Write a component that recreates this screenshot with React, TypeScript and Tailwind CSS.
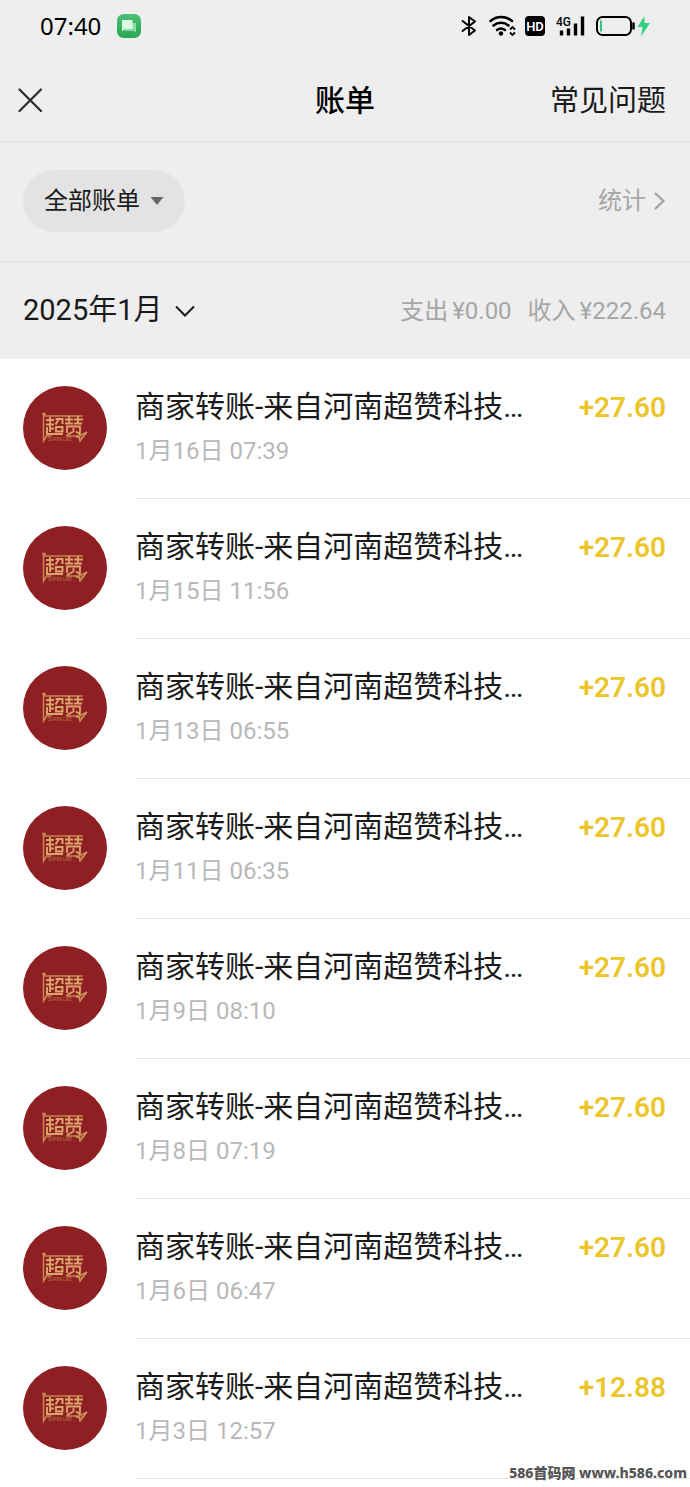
type Bill = { date: string; time: string; amount: string };

const BILLS: Bill[] = [
  { date: "1月16日", time: "07:39", amount: "+27.60" },
  { date: "1月15日", time: "11:56", amount: "+27.60" },
  { date: "1月13日", time: "06:55", amount: "+27.60" },
  { date: "1月11日", time: "06:35", amount: "+27.60" },
  { date: "1月9日", time: "08:10", amount: "+27.60" },
  { date: "1月8日", time: "07:19", amount: "+27.60" },
  { date: "1月6日", time: "06:47", amount: "+27.60" },
  { date: "1月3日", time: "12:57", amount: "+12.88" },
];

function StatusBar() {
  return (
    <div className="flex h-[52px] items-center justify-between px-10">
      <div className="flex items-center gap-4">
        <span className="font-['Noto_Sans',sans-serif] text-2xl text-black">07:40</span>
        <svg className="h-6 w-6" viewBox="0 0 24 24">
          <defs>
            <linearGradient id="msg" x1="0" y1="0" x2="0" y2="1">
              <stop offset="0" stopColor="#4cbf76" />
              <stop offset="1" stopColor="#2aa653" />
            </linearGradient>
          </defs>
          <rect width="24" height="24" rx="6.5" fill="url(#msg)" />
          <path d="M8 9h11v9.5L16.500 17H8z" fill="#8ed9a6" />
          <path d="M5 6h10.500v9H8l-3 2.500z" fill="#dcfae2" />
        </svg>
      </div>
      <svg className="h-7 w-[190px]" viewBox="0 0 190 28">
        {/* bluetooth */}
        <path d="M2.500 9l12.500 9.500L9 23V5l6 4.500L2.500 19" fill="none" stroke="#000" strokeWidth="2" strokeLinejoin="round" strokeLinecap="round" />
        {/* wifi */}
        <g fill="none" stroke="#000" strokeWidth="2.500" strokeLinecap="round">
          <path d="M30.500 9a16.500 16.500 0 0 1 21.500 0" />
          <path d="M33.500 13.500a12 12 0 0 1 15 0" />
          <path d="M37 18a6.500 6.500 0 0 1 8 0" />
        </g>
        <circle cx="41" cy="21.500" r="2.200" />
        <path d="M50 17.500l2.500-2.500 2.500 2.500M50 20.500l2.500 2.500 2.500-2.500" fill="none" stroke="#000" strokeWidth="1.800" />
        {/* HD */}
        <rect x="65" y="4" width="20" height="20" rx="4" />
        <text x="75" y="19" textAnchor="middle" fill="#fff" fontFamily="Roboto" fontWeight="600" fontSize="13">HD</text>
        {/* signal */}
        <text x="96" y="13.500" fontFamily="Roboto" fontWeight="500" fontSize="12">4G</text>
        <path d="M101.500 23.500v-5M108.500 23.500v-7M115.500 23.500v-12M122.500 23.500v-19" stroke="#000" strokeWidth="3.400" />
        {/* battery */}
        <rect x="137" y="5" width="34" height="18" rx="5.5" fill="none" stroke="#000" strokeWidth="2" />
        <path d="M141 8.500v11" stroke="#34c77b" strokeWidth="2" />
        <path d="M173.500 10.500v7" stroke="#000" strokeWidth="2.500" />
        <path d="M184.500 4L177.500 15h5l-1.500 9.500 9-13.500h-5.500z" fill="#34d07f" />
      </svg>
    </div>
  );
}

function Avatar() {
  return (
    <svg className="h-[84px] w-[84px] shrink-0" viewBox="0 0 84 84">
      <circle cx="42" cy="42" r="42" fill="#8e1f23" />
      {/* flag frame */}
      <path d="M19 27.500h3v2.500h38M20.500 28v27l3-5h5M43 50h12" fill="none" stroke="#c98850" strokeWidth="1.500" />
      {/* left mark */}
      <g fill="none" stroke="#dba56c" strokeWidth="1.900">
        <path d="M23 34h8M27 31v15M23 38.500h8M27 42.500h4M24 41v7h16M32.500 33h7v5M36 33l-3.500 5.500M33 41h6.500v4.500H33z" />
      </g>
      {/* right mark */}
      <g fill="none" stroke="#dba56c" strokeWidth="1.800">
        <path d="M42 33.500h8M46 30v7M42 37.500h8M51 33.500h9M55 30v7M51 37.500h8M44 47v-6.500h13V47M50.500 42v3.500L44 49M53 45.500l6 4" />
      </g>
      {/* star at the tail */}
      <path d="M53 51l11-5-7 9-1-4z" fill="#a8542f" stroke="#d39a60" strokeWidth="1.300" />
      <text x="25" y="54.500" fill="#b87845" fontFamily="Roboto" fontSize="4.500">SUPER LIKE</text>
    </svg>
  );
}

function BillRow({ bill }: { bill: Bill }) {
  return (
    <li className="flex h-[140px] gap-7 pl-[23px]">
      <div className="pt-[27px]">
        <Avatar />
      </div>
      <div className="flex min-w-0 flex-1 justify-between border-b border-[#e5e5e5] pr-6 pt-7">
        <div className="min-w-0">
          <div className="whitespace-nowrap text-[30px] leading-10 text-[#1a1a1a]">商家转账-来自河南超赞科技…</div>
          <div className="mt-2 text-2xl leading-8 text-[#b8b8b8]">
            {bill.date} {bill.time}
          </div>
        </div>
        <div className="text-[28px] font-semibold leading-[42px] text-[#ebc52a]">{bill.amount}</div>
      </div>
    </li>
  );
}

export default function App() {
  return (
    <div className="relative bg-white pb-2 font-[Roboto,'Noto_Sans_CJK_SC',sans-serif]">
      <div className="bg-[#eeeeee]">
        <StatusBar />

        <header className="grid h-[90px] grid-cols-[1fr_auto_1fr] items-center border-b border-[#e2e2e2] px-4 pt-2">
          <button aria-label="关闭" className="justify-self-start">
            <svg className="h-7 w-7" viewBox="0 0 28 28">
              <path d="M3.500 2.500L25 24M25 2.500L3.500 24" stroke="#2a2a2a" strokeWidth="2.200" strokeLinecap="round" />
            </svg>
          </button>
          <h1 className="text-[30px] font-medium leading-10 text-black">账单</h1>
          <a href="#" className="justify-self-end pr-2 text-[29px] leading-10 text-[#1a1a1a]">常见问题</a>
        </header>

        <div className="flex h-[120px] items-center justify-between border-b border-[#e2e2e2] pb-0.5 pl-[23px] pr-6">
          <button className="flex h-[62px] items-center gap-2.5 rounded-full bg-[#e3e3e3] px-[21px] text-2xl text-[#1a1a1a]">
            全部账单
            <svg className="h-2 w-3.5" viewBox="0 0 14 8">
              <path d="M0.500 0h13L7 8z" fill="#666" />
            </svg>
          </button>
          <a href="#" className="flex items-center gap-2 text-2xl text-[#a6a6a6]">
            统计
            <svg className="h-5 w-3" viewBox="0 0 12 20">
              <path d="M1 2l8.500 8L1 18" fill="none" stroke="#a0a0a0" strokeWidth="2.200" />
            </svg>
          </a>
        </div>

        <div className="flex h-[97px] items-center justify-between pl-[23px] pr-6">
          <button className="flex items-center gap-3 text-[29px] text-[#1a1a1a]">
            2025年1月
            <svg className="h-3 w-5" viewBox="0 0 20 12">
              <path d="M1 1.500l9 9 9-9" fill="none" stroke="#1a1a1a" strokeWidth="2" />
            </svg>
          </button>
          <div className="flex gap-4 text-2xl text-[#a6a6a6]">
            <span className="flex gap-1">支出<span>¥0.00</span></span>
            <span className="flex gap-1">收入<span>¥222.64</span></span>
          </div>
        </div>
      </div>

      <ul>
        {BILLS.map((bill) => (
          <BillRow key={bill.date} bill={bill} />
        ))}
      </ul>

      <div className="absolute bottom-1 right-[3px] font-['Noto_Sans','Noto_Sans_CJK_SC',sans-serif] text-[14px] font-extrabold leading-5 text-[#555]">
        586首码网 www.h586.com
      </div>
    </div>
  );
}
